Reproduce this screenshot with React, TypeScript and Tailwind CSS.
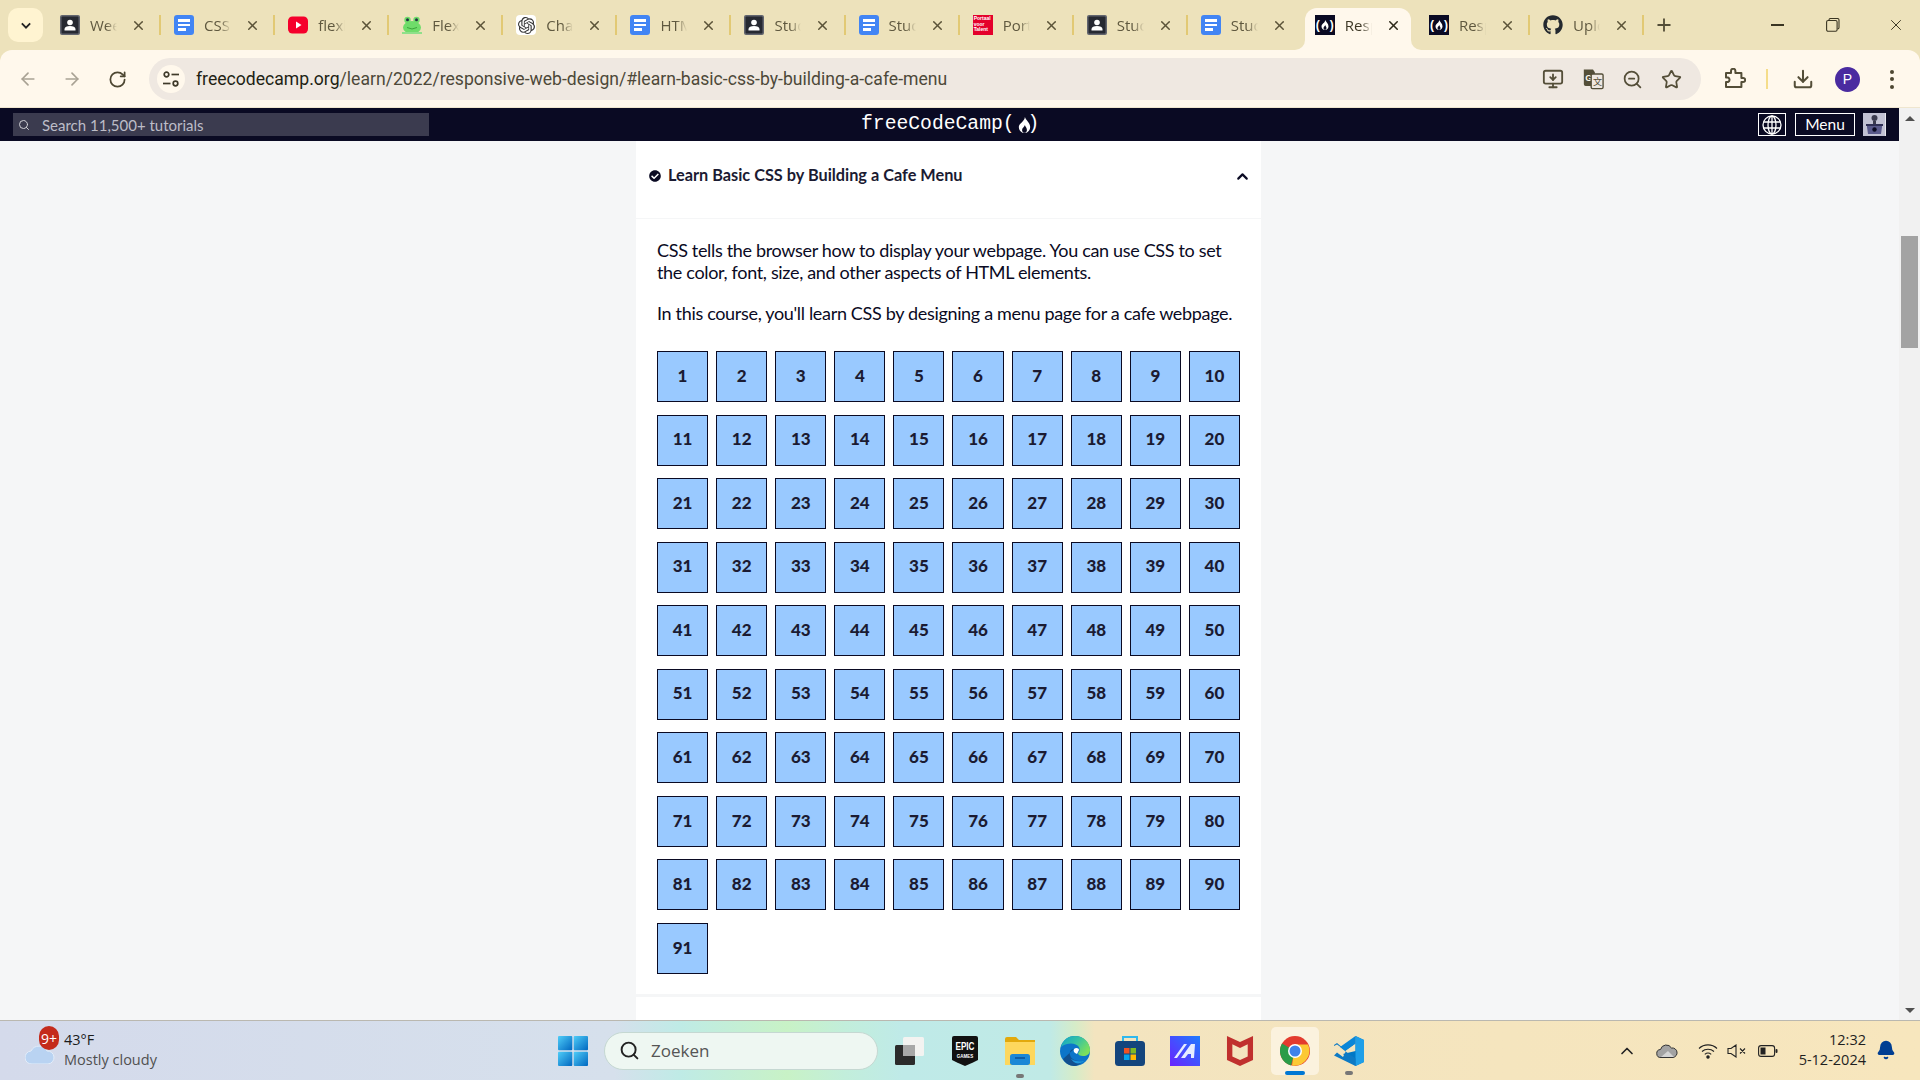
import React from "react";
import { ArrowLeft, ArrowRight, RotateCw, Search, ChevronUp, X, Plus, Star, ZoomOut, Download, Bell, MonitorDown } from "lucide-react";
import { FaGithub, FaCheckCircle } from "react-icons/fa";
import { SiOpenai, SiMcafee } from "react-icons/si";

const Doc = () => (
  <div className="w-[20px] h-[20px] rounded-[3px] bg-[#4285f4] flex flex-col gap-[2px] justify-center px-[4px]">
    <div className="h-[2.5px] bg-white" /><div className="h-[2.5px] bg-white" /><div className="h-[2.5px] bg-white w-[8px]" />
  </div>
);
const Person = () => (
  <svg viewBox="0 0 20 20" className="w-[20px] h-[20px]">
    <rect width="20" height="20" rx="2" fill="#62656e" /><rect x="1.500" y="1.500" width="17" height="17" rx="1" fill="#262932" />
    <circle cx="10" cy="7.500" r="2.800" fill="#fff" /><path d="M4.500 15.500v-1.500c0-2 2.500-3 5.500-3s5.500 1 5.500 3v1.500z" fill="#fff" />
  </svg>
);
const Yt = () => (
  <svg viewBox="0 0 20 20" className="w-[20px] h-[20px]"><rect y="1.500" width="20" height="17" rx="4.500" fill="#f5002c" /><path d="M8 6.500l5.500 3.500L8 13.500z" fill="#fff" /></svg>
);
const Frog = () => (
  <svg viewBox="0 0 20 20" className="w-[20px] h-[20px]">
    <ellipse cx="10" cy="12.500" rx="9" ry="6.500" fill="#6fdc6a" /><circle cx="5.500" cy="5" r="3.200" fill="#6fdc6a" /><circle cx="14.500" cy="5" r="3.200" fill="#6fdc6a" />
    <circle cx="5.500" cy="4.800" r="1.500" fill="#234" /><circle cx="14.500" cy="4.800" r="1.500" fill="#234" /><path d="M5 12.500q5 3 10 0" stroke="#3aa53a" fill="none" />
    <rect x="0" y="17" width="20" height="2" fill="#8fe08a" />
  </svg>
);
const Gpt = () => (
  <div className="w-[20px] h-[20px] rounded-[4px] bg-white flex items-center justify-center"><SiOpenai size={17} color="#333" /></div>
);
const Portaal = () => (
  <div className="w-[20px] h-[20px] bg-[#e4002b] text-white text-[5px] leading-[5.500px] font-bold font-['Liberation_Sans',sans-serif] pl-[1px] pt-[1px]">Portaal<br />voor<br />Talent</div>
);
const Flame = ({ w, h, hole = "#0a0a23" }: { w: number; h: number; hole?: string }) => (
  <svg viewBox="0 0 16 20" style={{ width: w, height: h }}>
    <path d="M8.500 0c.8 3.500 6.500 7 6.500 12.500C15 16 13 18.500 10.500 19.500H5.500C3 18.500 1 16 1 12.500 1 7.500 8 6 8.500 0z" fill="#fff" />
    <path d="M8.500 10c.4 2 2.500 3.500 2.500 6 0 1.500-.8 2.700-2 3.500H7c-1.200-.8-2-2-2-3.500 0-2.500 3-3.500 3.500-6z" fill={hole} />
  </svg>
);
const Fcc = () => (
  <div className="w-[20px] h-[20px] bg-[#0a0a23] flex items-center justify-center text-white font-['Liberation_Sans',sans-serif] text-[12px] font-bold leading-none gap-[1px]">
    <span>(</span><Flame w={8} h={10} /><span>)</span>
  </div>
);
const Gh = () => <FaGithub size={20} color="#24292f" />;

const tabs: { t: string; i: React.ReactNode; active?: boolean; sep?: boolean }[] = [
  { t: "Weekly", i: <Person />, sep: true },
  { t: "CSS Flexbox", i: <Doc />, sep: true },
  { t: "flexbox", i: <Yt />, sep: true },
  { t: "Flexbox Froggy", i: <Frog />, sep: true },
  { t: "ChatGPT", i: <Gpt />, sep: true },
  { t: "HTML", i: <Doc />, sep: true },
  { t: "Students", i: <Person />, sep: true },
  { t: "Students", i: <Doc />, sep: true },
  { t: "Portaal", i: <Portaal />, sep: true },
  { t: "Students", i: <Person />, sep: true },
  { t: "Students", i: <Doc /> },
  { t: "Responsive", i: <Fcc />, active: true },
  { t: "Responsive", i: <Fcc />, sep: true },
  { t: "Upload", i: <Gh />, sep: true },
];

function Tab({ t, i, active, sep }: { t: string; i: React.ReactNode; active?: boolean; sep?: boolean }) {
  return (
    <div className="relative w-[114.080px] h-[42px] flex items-center pl-[14px] pb-[8px] shrink-0">
      {active && (
        <>
          <div className="absolute left-[4px] right-[4px] top-0 bottom-0 bg-[#fff8ec] rounded-t-[12px]" />
          <div className="absolute left-[-6px] bottom-0 w-[10px] h-[10px] bg-[#fff8ec]"><div className="w-full h-full bg-[#ede2bb] rounded-br-[10px]" /></div>
          <div className="absolute right-[-6px] bottom-0 w-[10px] h-[10px] bg-[#fff8ec]"><div className="w-full h-full bg-[#ede2bb] rounded-bl-[10px]" /></div>
        </>
      )}
      <div className="relative w-[20px] h-[20px] shrink-0">{i}</div>
      <div className={`relative ml-[10px] w-[27px] overflow-hidden whitespace-nowrap text-[15px] font-['Open_Sans',sans-serif] [mask-image:linear-gradient(to_right,black_60%,transparent)] ${active ? "text-[#3d3826]" : "text-[#5f583f]"}`}>{t}</div>
      <X className={`relative ml-[14px] ${active ? "text-[#2e2a1a]" : "text-[#5b5338]"}`} size={15} strokeWidth={2.400} />
      {sep && <div className="absolute right-[-1px] top-[7px] w-[2px] h-[20px] bg-[#e2c974]" />}
    </div>
  );
}

const Translate = () => (
  <svg viewBox="0 0 24 24" className="w-[22px] h-[24px]">
    <path d="M2 1.500h10l2 3v15H4a2 2 0 0 1-2-2z" fill="#544e38" />
    <text x="3.500" y="14" fontSize="10" fontWeight="700" fill="#fff8ec" fontFamily="Liberation Sans">G</text>
    <rect x="10" y="6.500" width="13" height="16" rx="1.500" fill="#efe8e1" stroke="#544e38" strokeWidth="1.500" />
    <text x="12" y="18" fontSize="10" fill="#544e38" fontFamily="Noto Sans CJK SC">文</text>
  </svg>
);
const Puzzle = () => (
  <svg viewBox="0 0 22 22" className="w-[22px] h-[22px]" fill="none" stroke="#544e38" strokeWidth="2" strokeLinejoin="round">
    <path d="M2 6h5V4a2.200 2.200 0 0 1 4.400 0v2h6v5h1.800a2 2 0 0 1 0 4H17.400v5H2v-5h2a2.400 2.400 0 0 0 0-4.500H2z" transform="translate(0 -1)" />
  </svg>
);
const Tune = () => (
  <svg viewBox="0 0 18 18" className="w-[18px] h-[18px]" fill="none" stroke="#3f3a2a" strokeWidth="1.700">
    <circle cx="4.500" cy="4.500" r="2.300" /><path d="M9.500 4.500H17" /><circle cx="13.500" cy="13.500" r="2.300" /><path d="M1 13.500h7.500" />
  </svg>
);

const GlobeIcon = () => (
  <svg viewBox="0 0 22 22" className="w-[22px] h-[22px]" fill="none" stroke="#fff" strokeWidth="1.300">
    <circle cx="11" cy="11" r="9" /><ellipse cx="11" cy="11" rx="4" ry="9" /><path d="M11 2v18M2.600 8h16.800M2.600 14h16.800" />
  </svg>
);

const Avatar = () => (
  <div className="w-[23px] h-[23px] bg-[#c2c2d4] border-r border-[#e8e8ee]">
    <svg viewBox="0 0 23 23" className="w-[23px] h-[23px]">
      <circle cx="11.500" cy="5" r="3" fill="#3b3b4f" /><rect x="10" y="8" width="3" height="3" fill="#3b3b4f" />
      <path d="M4 11h15v3l-1 7H5l-1-7z" fill="#5a5a8c" /><rect x="3" y="11" width="17" height="2" fill="#2f2f55" /><circle cx="11.500" cy="16.500" r="2.200" fill="#0a0a23" />
    </svg>
  </div>
);

const WinLogo = () => (
  <svg viewBox="0 0 30 30" className="w-[30px] h-[30px]">
    <defs><linearGradient id="wl" x1="0" y1="0" x2="1" y2="1"><stop offset="0" stopColor="#4fcdf8" /><stop offset="1" stopColor="#0067c0" /></linearGradient></defs>
    <rect x="0" y="0" width="14.300" height="14.300" fill="url(#wl)" rx="1" /><rect x="15.700" y="0" width="14.300" height="14.300" fill="url(#wl)" rx="1" />
    <rect x="0" y="15.700" width="14.300" height="14.300" fill="url(#wl)" rx="1" /><rect x="15.700" y="15.700" width="14.300" height="14.300" fill="url(#wl)" rx="1" />
  </svg>
);
const TaskView = () => (
  <svg viewBox="0 0 30 30" className="w-[30px] h-[30px]">
    <rect x="0" y="9" width="20" height="20" rx="1.500" fill="#2b2b2b" /><rect x="8" y="1" width="21" height="19" rx="1.500" fill="#f3f3f1" /><rect x="8" y="9" width="12" height="11" fill="#a8a8a8" />
  </svg>
);
const Epic = () => (
  <svg viewBox="0 0 26 30" className="w-[26px] h-[30px]">
    <path d="M2 0h22a2 2 0 0 1 2 2v22l-5 2.500-8 3.500-8-3.500L0 24V2a2 2 0 0 1 2-2z" fill="#111" />
    <text x="13" y="14" textAnchor="middle" fontSize="11" fontWeight="700" fill="#fff" fontFamily="Liberation Sans" textLength="19" lengthAdjust="spacingAndGlyphs">EPIC</text>
    <text x="13" y="21.500" textAnchor="middle" fontSize="4.500" fontWeight="700" fill="#fff" fontFamily="Liberation Sans">GAMES</text>
  </svg>
);
const Files = () => (
  <svg viewBox="0 0 30 28" className="w-[30px] h-[28px]">
    <path d="M0 2a2 2 0 0 1 2-2h9l3 3h16v6H0z" fill="#e2a90c" /><path d="M0 5h30v23H0z" fill="#fdd75d" /><rect x="5" y="17" width="20" height="11" rx="2.500" fill="#1b87d6" /><rect x="10" y="20" width="10" height="2" fill="#0d5da6" />
  </svg>
);
const Edge = () => (
  <svg viewBox="0 0 30 30" className="w-[30px] h-[30px]">
    <defs><linearGradient id="eg" x1="0" y1="0" x2="1" y2="0.600"><stop offset="0" stopColor="#0fa4c9" /><stop offset="0.500" stopColor="#35c1a4" /><stop offset="1" stopColor="#7de05c" /></linearGradient></defs>
    <circle cx="15" cy="15" r="15" fill="#0c75c9" />
    <path d="M1 11C3 3 9 0 15 0c8 0 15 6 15 14 0 4-3 6-7 6-3 0-5-1-5-3 2-1 2-4 1-6-3-4-11-5-18 0z" fill="url(#eg)" />
    <path d="M14 13c-3 0-5 3-4 6 1 4 6 7 13 6-3 3-6 5-9 5-5 0-9-3-11-7" fill="#11508f" />
    <path d="M17 18c-3-1-4-3-3-5 2-2 5-1 5 1" fill="#fff" />
    <path d="M10 21c2 4 7 5 14 4l-1 1c-6 3-10 1-13-5z" fill="#1d96de" />
  </svg>
);
const StoreIcon = () => (
  <svg viewBox="0 0 30 30" className="w-[30px] h-[30px]">
    <path d="M8 5V1h14v4" fill="none" stroke="#2fb8ee" strokeWidth="2" />
    <rect x="0" y="5" width="30" height="25" rx="3.500" fill="#14457d" />
    <rect x="9" y="12" width="5.500" height="5.500" fill="#f05323" /><rect x="15.500" y="12" width="5.500" height="5.500" fill="#80b924" />
    <rect x="9" y="18.500" width="5.500" height="5.500" fill="#05a5ee" /><rect x="15.500" y="18.500" width="5.500" height="5.500" fill="#ffb902" />
  </svg>
);
const Maple = () => (
  <svg viewBox="0 0 30 30" className="w-[30px] h-[30px]">
    <defs><linearGradient id="mp" x1="0" y1="1" x2="1" y2="0"><stop offset="0" stopColor="#6a22ff" /><stop offset="1" stopColor="#1e7cff" /></linearGradient></defs>
    <rect width="30" height="30" fill="url(#mp)" />
    <path d="M4 22L14 8h3L7 22zM11 22L21 8h4l-1 14h-3v-4h-3l-3 4z" fill="#e6ecff" />
  </svg>
);
const McAfee = () => <SiMcafee size={30} color="#c0302e" />;
const ChromeLogo = () => (
  <svg viewBox="0 0 30 30" className="w-[30px] h-[30px]">
    <circle cx="15" cy="15" r="15" fill="#e33b2e" />
    <path d="M15 15L2 7.500A15 15 0 0 0 11 29.500z" fill="#2a9c48" />
    <path d="M15 8.500h13a15 15 0 0 1-16 21z" fill="#fcc934" />
    <circle cx="15" cy="15" r="7" fill="#fff" /><circle cx="15" cy="15" r="5.500" fill="#3f83ea" />
  </svg>
);
const VSCode = () => (
  <svg viewBox="0 0 30 30" className="w-[30px] h-[30px]">
    <path d="M21.500 0L30 4v22l-8.500 4L9 18l12.500-3z" fill="#0078c6" />
    <path d="M21.500 0L30 4v22l-8.500 4z" fill="#1f9fe8" />
    <path d="M21.500 7.500L11 15l10.500 7.500V30L0 19.500l3-3 6 4.500 3-6-9-6.500-3 1.500V9l3-2 6 5z" fill="#0e7ac4" />
    <path d="M21.500 0v7.500L11 15 6 11z" fill="#0a86d8" />
  </svg>
);

function TrayCloud() {
  return (
    <svg viewBox="0 0 22 14" className="w-[22px] h-[14px]">
      <path d="M5 13.500a4 4 0 0 1-.5-8A6 6 0 0 1 15.500 4 4.800 4.800 0 0 1 17 13.500z" fill="#a3a3a3" stroke="#333" strokeWidth="1" />
      <path d="M5 13l7-6 6 6z" fill="#d4d4d4" />
    </svg>
  );
}
function Wifi2() {
  return (
    <svg viewBox="0 0 20 16" className="w-[20px] h-[16px]" fill="none" stroke="#222" strokeWidth="1.100">
      <path d="M1 5.500a13 13 0 0 1 18 0M4 8.500a9 9 0 0 1 12 0M6.800 11.300a5 5 0 0 1 6.400 0" /><circle cx="10" cy="14" r="1.200" fill="#222" />
    </svg>
  );
}
function Mute() {
  return (
    <svg viewBox="0 0 20 14" className="w-[20px] h-[14px]" fill="none" stroke="#222" strokeWidth="1.100">
      <path d="M1 4.500h3L9 1v12L4 9.500H1zM13 4.500l5 5M18 4.500l-5 5" />
    </svg>
  );
}
function Battery() {
  return (
    <svg viewBox="0 0 20 12" className="w-[20px] h-[12px]">
      <rect x="0.600" y="0.600" width="16" height="10.800" rx="2.500" fill="none" stroke="#222" strokeWidth="1.100" /><rect x="2.500" y="2.500" width="5" height="7" fill="#222" /><rect x="17.500" y="4" width="2" height="4" rx="1" fill="#222" />
    </svg>
  );
}

export default function App() {
  return (
    <div className="w-[1920px] h-[1080px] overflow-hidden flex flex-col bg-[#ede2bb]">
      {/* tab strip */}
      <div className="h-[50px] flex items-start pt-[8px] pl-[8px] shrink-0">
        <div className="w-[35px] h-[34px] rounded-[10px] bg-[#fff4d1] flex items-center justify-center">
          <svg viewBox="0 0 12 8" className="w-[10px] h-[7px]" fill="none" stroke="#222" strokeWidth="2.200"><path d="M1 1.500l5 5 5-5" /></svg>
        </div>
        <div className="ml-[3px] flex">
          {tabs.map((t, i) => <Tab key={i} {...t} />)}
        </div>
        <Plus className="ml-[11px] mt-[7px] text-[#544e38]" size={20} strokeWidth={2.200} />
        <div className="ml-auto flex items-center h-[34px]">
          <div className="w-[13px] h-[1.500px] bg-[#3a3522] mr-[42px]" />
          <svg viewBox="0 0 14 14" className="w-[14px] h-[14px] mr-[47px]" fill="none" stroke="#3a3522" strokeWidth="1.100"><rect x="0.600" y="2.500" width="10.500" height="10.800" rx="1.500" /><path d="M3 2.500V2a1.500 1.500 0 0 1 1.500-1.500h7A1.500 1.500 0 0 1 13 2v7.500a1.500 1.500 0 0 1-1.500 1.500" /></svg>
          <X className="mr-[15px] text-[#3a3522]" size={18} strokeWidth={1.300} />
        </div>
      </div>

      {/* toolbar */}
      <div className="h-[58px] bg-[#fff8ec] rounded-t-[12px] flex items-center shrink-0 pt-[1px] border-b border-[#efe6cf] relative">
        <ArrowLeft className="ml-[18px] text-[#a9a294]" size={20} strokeWidth={2} />
        <ArrowRight className="ml-[24px] text-[#a9a294]" size={20} strokeWidth={2} />
        <RotateCw className="ml-[26px] text-[#4d4732]" size={19} strokeWidth={2.200} />
        <div className="ml-[22px] w-[1552px] h-[42px] rounded-full bg-[#efe8e1] flex items-center pl-[8px]">
          <div className="w-[28px] h-[28px] rounded-full bg-[#fff8ec] flex items-center justify-center"><Tune /></div>
          <div className="ml-[11px] text-[17.600px] font-['Roboto',sans-serif] text-[#4d4839] whitespace-nowrap"><span className="text-[#221f14]">freecodecamp.org</span>/learn/2022/responsive-web-design/#learn-basic-css-by-building-a-cafe-menu</div>
          <div className="ml-auto flex items-center gap-[18px] pr-[19px]">
            <MonitorDown className="text-[#544e38]" size={22} strokeWidth={2} />
            <Translate />
            <ZoomOut className="text-[#544e38]" size={21} strokeWidth={2} />
            <Star className="text-[#544e38]" size={21} strokeWidth={2} />
          </div>
        </div>
        <div className="ml-[23px]"><Puzzle /></div>
        <div className="ml-[20px] w-[2px] h-[20px] bg-[#f5dd8a]" />
        <Download className="ml-[24px] text-[#544e38]" size={22} strokeWidth={2.200} />
        <div className="ml-[21px] w-[25px] h-[25px] rounded-full bg-[#4a2ba0] flex items-center justify-center text-white text-[14px] font-['Liberation_Sans',sans-serif]">P</div>
        <div className="ml-[30px] flex flex-col gap-[3.500px]">
          <div className="w-[4px] h-[4px] rounded-full bg-[#4d4732]" /><div className="w-[4px] h-[4px] rounded-full bg-[#4d4732]" /><div className="w-[4px] h-[4px] rounded-full bg-[#4d4732]" />
        </div>
      </div>

      {/* page */}
      <div className="h-[912px] flex shrink-0 bg-[#f5f6f7] font-['Lato',sans-serif]">
        <div className="w-[1899px] flex flex-col overflow-hidden">
          <div className="h-[33px] bg-[#0a0a23] flex items-center shrink-0 pl-[13px] pr-[13px] relative">
            <div className="w-[416px] h-[23px] bg-[#3b3b4f] flex items-center pl-[5px]">
              <Search className="text-[#d0d0d5]" size={12} strokeWidth={2} />
              <span className="ml-[12px] text-[15px] text-[#bdbdc8] pt-[1px]">Search 11,500+ tutorials</span>
            </div>
            <div className="absolute left-[861px] top-0 h-[33px] flex items-center font-['Liberation_Mono',monospace] text-[19.700px] text-white">
              <span>freeCodeCamp(</span>
              <span className="ml-[3px] mr-[-3px] flex"><Flame w={13} h={18} /></span>
              <span>)</span>
            </div>
            <div className="ml-auto flex items-center">
              <div className="w-[28px] h-[23px] border border-white flex items-center justify-center"><GlobeIcon /></div>
              <div className="ml-[9px] w-[60px] h-[23px] border border-white flex items-center justify-center text-white text-[15.500px]">Menu</div>
              <div className="ml-[8px]"><Avatar /></div>
            </div>
          </div>

          <div className="ml-[636px] w-[625px] bg-white flex-1 text-[#0a0a23]">
            <div className="h-[78px] border-b border-[#f5f6f7] flex items-start pt-[23px] pl-[13px] pr-[10px]">
              <FaCheckCircle className="text-[#0a0a23] mt-[6px]" size={12} />
              <span className="ml-[7px] text-[16.300px] font-bold text-[#1b1b32] leading-[21px]">Learn Basic CSS by Building a Cafe Menu</span>
              <ChevronUp className="ml-auto mt-[4px] text-[#0a0a23]" size={17} strokeWidth={3} />
            </div>
            <div className="pt-[20px] pl-[21px] pr-[21px] pb-[20px] border-b-[3px] border-[#f5f6f7]">
              <p className="text-[18px] leading-[22px] tracking-[-0.330px] mb-[19px]">CSS tells the browser how to display your webpage. You can use CSS to set the color, font, size, and other aspects of HTML elements.</p>
              <p className="text-[18px] leading-[22px] tracking-[-0.330px] mb-[27px] whitespace-nowrap">In this course, you'll learn CSS by designing a menu page for a cafe webpage.</p>
              <div className="w-[583px] grid grid-cols-10 gap-x-[8px] gap-y-[12.550px] auto-rows-[51px]">
                {Array.from({ length: 91 }, (_, i) => (
                  <div key={i} className="bg-[#99c9ff] border border-[#0a0a23] flex items-center justify-center font-black pb-[2px] text-[17px] text-[#1b1b32]">{i + 1}</div>
                ))}
              </div>
            </div>
          </div>
        </div>
        <div className="w-[21px] bg-[#f1f1f1] flex flex-col items-center pt-[8px] pb-[7px]">
          <div className="w-0 h-0 border-x-[5px] border-x-transparent border-b-[5px] border-b-[#505050]" />
          <div className="mt-[115px] w-[17px] h-[112px] bg-[#a3a3a3]" />
          <div className="mt-auto w-0 h-0 border-x-[5px] border-x-transparent border-t-[5px] border-t-[#505050]" />
        </div>
      </div>

      {/* taskbar */}
      <div className="h-[60px] shrink-0 border-t border-[#bab8b0] bg-[linear-gradient(to_right,#d4daeb_0%,#d6e0ec_32%,#bfebe6_35.400%,#c8f2c6_41%,#c2eedb_44%,#bfeae8_47%,#c0eae6_54.700%,#d6ecc8_56%,#f3e4bf_57%,#f7e6bd_100%)] flex items-center relative">
        <div className="relative ml-[25px] w-[30px] h-[20px] mt-[9px]">
          <svg viewBox="0 0 30 19" className="w-[30px] h-[19px]"><path d="M7 19a6.500 6.500 0 0 1-1-13A9 9 0 0 1 22 6a6.500 6.500 0 0 1 1 13z" fill="#b9d3f2" stroke="#e3edf9" /></svg>
          <div className="absolute left-[14px] top-[-19px] w-[20px] h-[24px] rounded-full bg-[#c42b1c] text-white text-[14px] flex items-center justify-center font-['Open_Sans',sans-serif]">9+</div>
        </div>
        <div className="ml-[9px] w-[94px] font-['Open_Sans',sans-serif] text-[14.500px] leading-[20px] mt-[-2px]">
          <div className="text-[#1b1b1b]">43°F</div>
          <div className="text-[#505050]">Mostly cloudy</div>
        </div>
        <div className="ml-[400px]"><WinLogo /></div>
        <div className="ml-[16px] w-[274px] h-[38px] rounded-full border border-[#c5d8d2] bg-[#eef7f2] flex items-center pl-[14px]">
          <Search className="text-[#222]" size={21} strokeWidth={2.200} />
          <span className="ml-[11px] text-[17px] font-['Open_Sans',sans-serif] text-[#555]">Zoeken</span>
        </div>
        <div className="ml-[17px]"><TaskView /></div>
        <div className="ml-[27px]"><Epic /></div>
        <div className="ml-[27px] relative"><Files /><div className="absolute left-[11px] top-[37px] w-[8px] h-[4px] rounded-full bg-[#777]" /></div>
        <div className="ml-[25px]"><Edge /></div>
        <div className="ml-[25px]"><StoreIcon /></div>
        <div className="ml-[25px]"><Maple /></div>
        <div className="ml-[25px]"><McAfee /></div>
        <div className="ml-[16px] w-[48px] h-[48px] rounded-[5px] bg-[#fbf2de] flex items-center justify-center relative">
          <ChromeLogo />
          <div className="absolute left-[14px] bottom-0 w-[20px] h-[3.500px] rounded-full bg-[#0078d4]" />
        </div>
        <div className="ml-[15px] relative"><VSCode /><div className="absolute left-[11px] top-[35px] w-[8px] h-[4px] rounded-full bg-[#777]" /></div>
        <ChevronUp className="ml-[253px] text-[#222]" size={20} strokeWidth={2} />
        <div className="ml-[19px]"><TrayCloud /></div>
        <div className="ml-[20px]"><Wifi2 /></div>
        <div className="ml-[9px]"><Mute /></div>
        <div className="ml-[11px]"><Battery /></div>
        <div className="absolute right-[54px] top-[9px] text-right font-['Open_Sans',sans-serif] text-[14.500px] leading-[20px] text-[#1f1f1f]">
          <div>12:32</div><div>5-12-2024</div>
        </div>
        <Bell className="absolute right-[24px] top-[19px] text-[#003e92] fill-[#003e92]" size={20} />
      </div>
    </div>
  );
}
